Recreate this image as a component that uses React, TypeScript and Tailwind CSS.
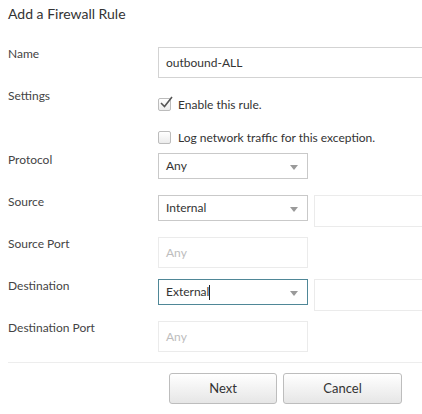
import React from "react";

const font = { fontFamily: "Lato, 'Open Sans', sans-serif" };

function Caret() {
  return (
    <svg width="8" height="5" viewBox="0 0 8 5" className="absolute right-[9px] top-[11px]">
      <path d="M0 0 L8 0 L4 5 Z" fill="#9a9a9a" />
    </svg>
  );
}

function Select({ value, active, cursor }: { value: string; active?: boolean; cursor?: boolean }) {
  return (
    <div
      className={
        "relative w-[150px] h-[26px] bg-white flex items-center pl-[7px] text-[12px] text-[#333] " +
        (active ? "border border-[#4f8797]" : "border border-[#c9c9c9]")
      }
    >
      <span>{value}</span>
      {cursor && <span className="inline-block w-px h-[15px] bg-[#222]" />}
      <Caret />
    </div>
  );
}

function TextBox({ value, placeholder, wide }: { value?: string; placeholder?: string; wide?: boolean }) {
  return (
    <div
      className={
        "h-[31px] bg-white flex items-center pl-[7px] text-[12px] shrink-0 " +
        (wide ? "w-[300px] border border-[#d3d3d3] text-[#333]" : "w-[150px] border border-[#ebebeb] text-[#bdbdbd]")
      }
    >
      {value ?? placeholder}
    </div>
  );
}

function EmptyBox() {
  return <div className="w-[150px] h-[32px] border border-[#ebebeb] bg-white shrink-0" />;
}

function Checkbox({ checked }: { checked?: boolean }) {
  return (
    <div className="relative w-[13px] h-[13px] rounded-[2px] border border-[#bcbcbc] bg-gradient-to-b from-white to-[#ececec] shrink-0">
      {checked && (
        <svg width="16" height="14" viewBox="0 0 16 14" className="absolute left-[0px] top-[-4px]">
          <path d="M2 8 L5.5 11.5 L13 2" stroke="#555" strokeWidth="1.6" fill="none" />
        </svg>
      )}
    </div>
  );
}

function Row({ label, children, h = "h-[42px]" }: { label: string; children: React.ReactNode; h?: string }) {
  return (
    <div className={"flex " + h}>
      <div className="w-[150px] shrink-0 text-[12px] leading-[14px] text-[#444]">{label}</div>
      <div className="flex gap-[6px] items-start">{children}</div>
    </div>
  );
}

export default function App() {
  return (
    <div className="w-[422px] h-[414px] bg-white overflow-hidden px-[8px]" style={font}>
      <div className="h-[47px] pt-[6px] text-[14px] leading-[16px] text-[#333]">Add a Firewall Rule</div>
      <Row label="Name">
        <TextBox value="outbound-ALL" wide />
      </Row>
      <Row label="Settings" h="h-[64px]">
        <div className="flex flex-col pt-[9px] gap-[20px] text-[12px] text-[#333]">
          <div className="flex items-center gap-[7px] h-[13px]">
            <Checkbox checked />
            <span>Enable this rule.</span>
          </div>
          <div className="flex items-center gap-[7px] h-[13px]">
            <Checkbox />
            <span>Log network traffic for this exception.</span>
          </div>
        </div>
      </Row>
      <Row label="Protocol">
        <Select value="Any" />
      </Row>
      <Row label="Source">
        <Select value="Internal" />
        <EmptyBox />
      </Row>
      <Row label="Source Port">
        <TextBox placeholder="Any" />
      </Row>
      <Row label="Destination">
        <Select value="External" active cursor />
        <EmptyBox />
      </Row>
      <Row label="Destination Port">
        <TextBox placeholder="Any" />
      </Row>
      <div className="h-px bg-[#ededed] -mt-[1px] mr-[-8px]" />
      <div className="flex gap-[6px] pl-[161px] pt-[10px]">
        <button className="w-[108px] h-[31px] rounded-[3px] border border-[#bdbdbd] bg-gradient-to-b from-white to-[#e6e6e6] text-[13px] text-[#333]">
          Next
        </button>
        <button className="w-[119px] h-[31px] rounded-[3px] border border-[#bdbdbd] bg-gradient-to-b from-white to-[#e6e6e6] text-[13px] text-[#333]">
          Cancel
        </button>
      </div>
    </div>
  );
}
